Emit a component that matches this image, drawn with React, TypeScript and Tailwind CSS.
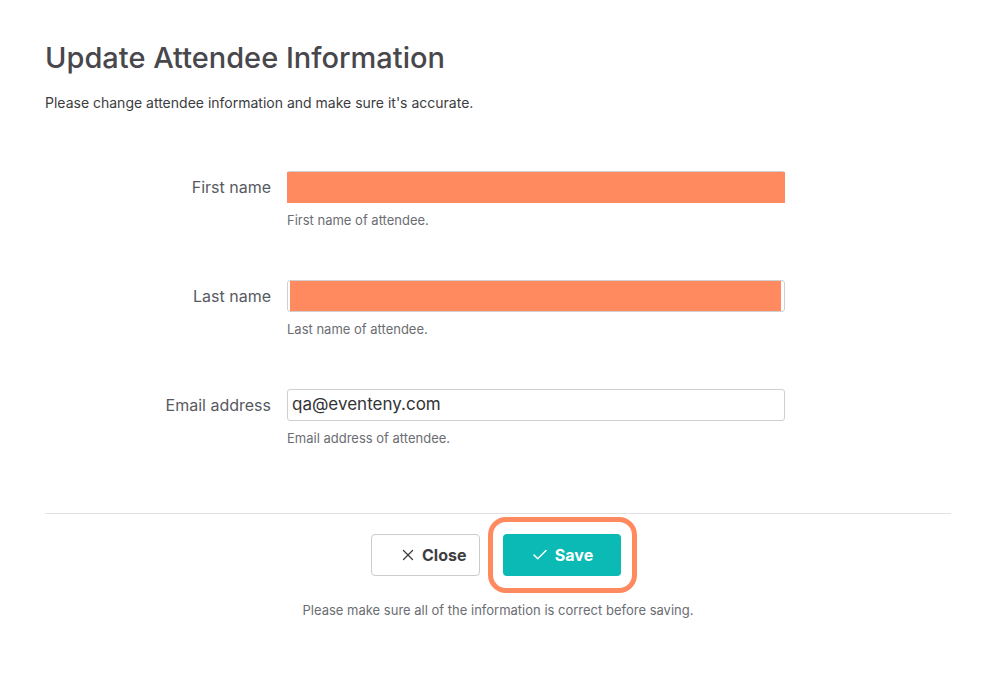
import React from 'react';
import { X, Check } from 'lucide-react';

const font = { fontFamily: 'Inter, "Noto Sans", sans-serif' };

type FieldProps = {
  label: string;
  help: string;
  children: React.ReactNode;
};

function Field({ label, help, children }: FieldProps) {
  return (
    <div className="flex gap-4">
      <div className="w-[226px] h-[32px] flex items-center justify-end text-[16px] text-[#575a62]">
        {label}
      </div>
      <div className="w-[498px]">
        {children}
        <p className="mt-[10px] text-[13px] leading-[14px] text-[#6b6d73]">{help}</p>
      </div>
    </div>
  );
}

export default function App() {
  return (
    <div className="min-h-screen bg-white px-[45px] pt-[40px]" style={font}>
      {/* Header */}
      <h1 className="text-[29px] leading-[36px] font-medium text-[#47474c]">
        Update Attendee Information
      </h1>
      <p className="mt-[18px] text-[14px] leading-[18px] text-[#3c3c41]">
        Please change attendee information and make sure it's accurate.
      </p>

      {/* Form */}
      <div className="mt-[59px] flex flex-col gap-[53px]">
        <Field label="First name" help="First name of attendee.">
          <div className="h-[32px] rounded-t-[3px] border-t border-[#d0d0d0]">
            <div className="h-[31px] bg-[#ff8a60]" />
          </div>
        </Field>
        <Field label="Last name" help="Last name of attendee.">
          <div className="h-[32px] rounded-[3px] border border-[#cfcfcf] pl-[2px] pr-[3px] flex">
            <div className="flex-1 bg-[#ff8a60]" />
          </div>
        </Field>
        <Field label="Email address" help="Email address of attendee.">
          <div className="h-[32px] rounded-[3px] border border-[#cfcfcf] flex items-center px-[4px] text-[17px] text-[#333336]">
            qa@eventeny.com
          </div>
        </Field>
      </div>

      {/* Footer */}
      <div className="mt-[68px] border-t border-[#e2e2e2]" />
      <div className="mt-[20px] mr-[4px] flex justify-center gap-[23px]">
        <button className="w-[109px] h-[42px] flex items-center pl-[27px] gap-[5px] rounded-[4px] border border-[#cccccc] bg-white text-[16px] font-bold text-[#3d3d40]">
          <X size={18} strokeWidth={1.7} />
          Close
        </button>
        <div className="relative">
          <span className="absolute -left-[15px] -top-[17px] -right-[16px] -bottom-[17px] rounded-[18px] border-[5px] border-[#ff8a60]" />
          <button className="relative w-[118px] h-[42px] flex items-center justify-center gap-[6px] rounded-[4px] bg-[#0bbab4] text-[16px] font-bold text-white">
            <Check size={18} strokeWidth={2} />
            Save
          </button>
        </div>
      </div>
      <p className="mt-[26px] text-center text-[13px] leading-[16px] text-[#6b6d73]">
        Please make sure all of the information is correct before saving.
      </p>
    </div>
  );
}
